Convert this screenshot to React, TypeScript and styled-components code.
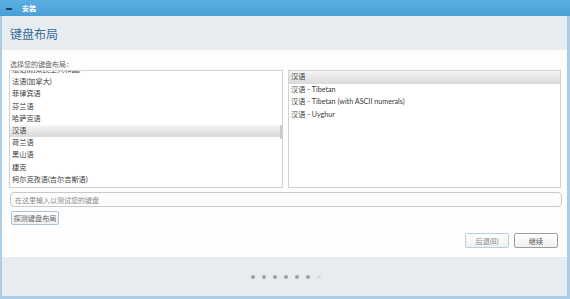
import React from "react";
import styled, { createGlobalStyle } from "styled-components";

const Global = createGlobalStyle`
  html, body { margin: 0; padding: 0; background: #ffffff; }
  body { font-family: Lato, "Noto Sans CJK SC", sans-serif; }
  * { box-sizing: border-box; }
`;

const FONT = `Lato, "Noto Sans CJK SC", sans-serif`;

const Window = styled.div`
  width: 570px;
  height: 299px;
  display: flex;
  flex-direction: column;
  overflow: hidden;
  background: #fdfdfd;
`;

const TitleBar = styled.div`
  height: 16px;
  flex: none;
  display: flex;
  align-items: center;
  background: linear-gradient(#5aaee2, #4a9fd6);
  padding-left: 6px;
  gap: 10px;
`;

const Minimize = styled.div`
  width: 6px;
  height: 2px;
  background: #1f3f66;
  margin-top: 2px;
`;

const TitleText = styled.span`
  color: #ffffff;
  font-family: ${FONT};
  font-size: 7px;
  font-weight: 700;
`;

const Frame = styled.div`
  flex: 1;
  display: flex;
  flex-direction: column;
  border-left: 2px solid #a9cde8;
  border-right: 3px solid #a9cde8;
  border-bottom: 3px solid #a9cde8;
  min-height: 0;
`;

const Header = styled.div`
  height: 34px;
  flex: none;
  background: #e7ecf0;
  display: flex;
  align-items: center;
  padding-left: 8px;
  padding-top: 1px;
`;

const PageTitle = styled.h1`
  margin: 0;
  font-family: ${FONT};
  font-size: 12px;
  font-weight: 400;
  color: #3b6c9a;
`;

const Content = styled.div`
  flex: none;
  height: 207px;
  background: #fdfdfd;
  padding: 9px 6px 0 7px;
  display: flex;
  flex-direction: column;
`;

const Label = styled.div`
  font-family: ${FONT};
  font-size: 7px;
  line-height: 10px;
  height: 10px;
  color: #666;
  margin-left: 1px;
`;

const Lists = styled.div`
  display: flex;
  gap: 5px;
  margin-top: 1px;
  height: 118px;
`;

const ListBox = styled.div<{ $w: number }>`
  position: relative;
  width: ${(p) => p.$w}px;
  height: 100%;
  border: 1px solid #d2d2d2;
  background: #ffffff;
  overflow: hidden;
`;

const ListInner = styled.div<{ $offset: number }>`
  margin-top: ${(p) => p.$offset}px;
`;

const Row = styled.div<{ $sel?: boolean; $h: number }>`
  height: ${(p) => p.$h}px;
  line-height: ${(p) => p.$h}px;
  padding-left: 2px;
  font-family: ${FONT};
  font-size: 7.2px;
  color: #3a3a3a;
  white-space: nowrap;
  background: ${(p) => (p.$sel ? "linear-gradient(#f6f6f6, #d9d9d9)" : "transparent")};
`;

const ScrollThumb = styled.div`
  position: absolute;
  right: 0;
  top: 54px;
  width: 2px;
  height: 14px;
  background: #c9c9c9;
`;

const TestInput = styled.input`
  margin-top: 4px;
  margin-left: 1px;
  width: 552px;
  height: 15px;
  border: 1px solid #c9c9c9;
  border-radius: 4px;
  padding: 0 4px;
  font-family: ${FONT};
  font-size: 7px;
  color: #333;
  background: #fdfdfd;
  outline: none;
  &::placeholder { color: #8a8a8a; }
`;

const DetectButton = styled.button`
  margin-top: 4px;
  margin-left: 2px;
  align-self: flex-start;
  width: 48px;
  height: 14px;
  padding: 0;
  border: 1px solid #a9c2dc;
  border-radius: 2px;
  background: linear-gradient(#ffffff, #f0f0f0);
  font-family: ${FONT};
  font-size: 7.2px;
  color: #666;
`;

const ActionRow = styled.div`
  margin-top: 8px;
  display: flex;
  justify-content: flex-end;
  gap: 5px;
  padding-right: 3px;
`;

const ActionButton = styled.button<{ $primary?: boolean }>`
  width: 44px;
  height: 15px;
  padding: 0;
  border: ${(p) => (p.$primary ? "1.5px solid #9c9c9c" : "1px solid #b9cde2")};
  border-radius: 2px;
  background: linear-gradient(#ffffff, #efefef);
  font-family: ${FONT};
  font-size: 7.2px;
  color: ${(p) => (p.$primary ? "#555" : "#8a8a8a")};
`;

const Footer = styled.div`
  flex: 1;
  background: #e7ecf0;
  display: flex;
  align-items: center;
  justify-content: center;
  gap: 7px;
  padding-left: 2px;
`;

const Dot = styled.div<{ $dim?: boolean }>`
  width: 4px;
  height: 4px;
  border-radius: 50%;
  background: ${(p) => (p.$dim ? "#d6d9dc" : "#9ea2a6")};
`;

const leftItems = [
  "法语(刚果民主共和国)",
  "法语(加拿大)",
  "菲律宾语",
  "芬兰语",
  "哈萨克语",
  "汉语",
  "荷兰语",
  "黑山语",
  "捷克",
  "柯尔克孜语(吉尔吉斯语)",
];

const rightItems = [
  "汉语",
  "汉语 - Tibetan",
  "汉语 - Tibetan (with ASCII numerals)",
  "汉语 - Uyghur",
];

export default function App() {
  return (
    <>
      <Global />
      <Window>
        <TitleBar>
          <Minimize />
          <TitleText>安装</TitleText>
        </TitleBar>
        <Frame>
          <Header>
            <PageTitle>键盘布局</PageTitle>
          </Header>
          <Content>
            <Label>选择您的键盘布局：</Label>
            <Lists>
              <ListBox $w={274}>
                <ListInner $offset={-7}>
                  {leftItems.map((t) => (
                    <Row key={t} $h={12.2} $sel={t === "汉语"}>
                      {t}
                    </Row>
                  ))}
                </ListInner>
                <ScrollThumb />
              </ListBox>
              <ListBox $w={273}>
                <ListInner $offset={0}>
                  {rightItems.map((t, i) => (
                    <Row key={t} $h={12.6} $sel={i === 0}>
                      {t}
                    </Row>
                  ))}
                </ListInner>
              </ListBox>
            </Lists>
            <TestInput placeholder="在这里输入以测试您的键盘" />
            <DetectButton>探测键盘布局</DetectButton>
            <ActionRow>
              <ActionButton>后退(B)</ActionButton>
              <ActionButton $primary>继续</ActionButton>
            </ActionRow>
          </Content>
          <Footer>
            {[0, 1, 2, 3, 4, 5, 6].map((i) => (
              <Dot key={i} $dim={i === 6} />
            ))}
          </Footer>
        </Frame>
      </Window>
    </>
  );
}
